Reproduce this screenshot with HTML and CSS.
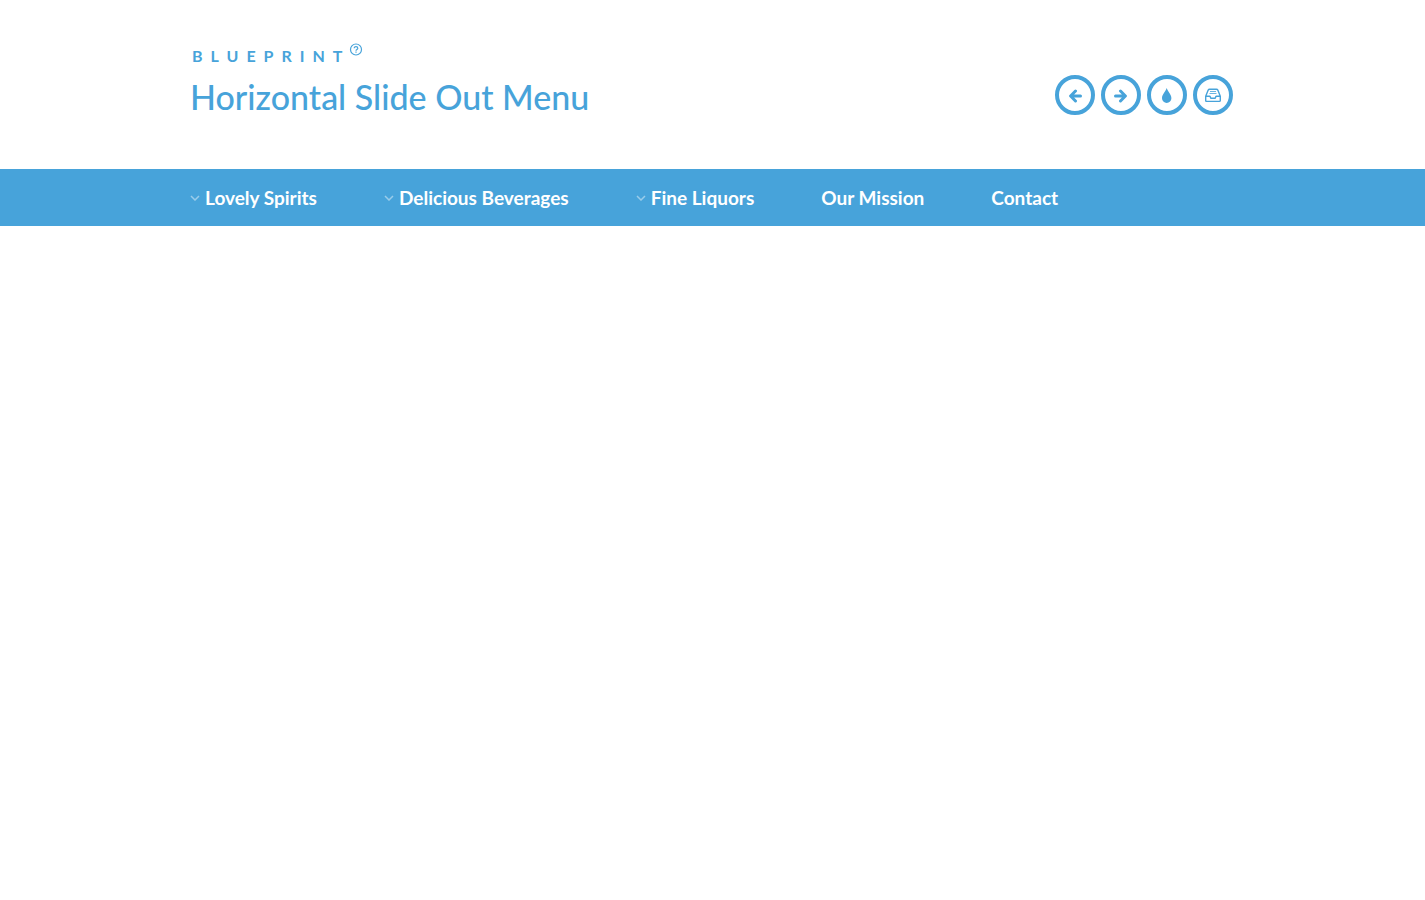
FILE: index.html
```html
<!DOCTYPE html>
<html lang="en">
<head>
<meta charset="utf-8">
<meta name="viewport" content="width=device-width, initial-scale=1">
<title>Horizontal Slide Out Menu</title>
<link rel="stylesheet" href="styles.css">
</head>
<body>
<header class="header">
  <div class="heading">
    <p class="kicker">Blueprint<a class="help" href="#about" aria-label="About Blueprint"><svg viewBox="0 0 14 14" aria-hidden="true"><circle cx="7" cy="6.500" r="5.500"/><path d="M5.200 5.300c0-2.300 3.600-2.200 3.600 0 0 1.200-1.800 1.200-1.800 2.400M7 8.600v1.200"/></svg></a></p>
    <h1 class="title">Horizontal Slide Out Menu</h1>
  </div>
  <nav class="tools" aria-label="Demo navigation">
    <a class="tool" href="#previous" aria-label="Previous"><svg viewBox="0 0 16 16" aria-hidden="true"><path class="thick" d="M13.500 9H4.500M8.500 4L3.600 9l4.900 5"/></svg></a>
    <a class="tool" href="#next" aria-label="Next"><svg viewBox="0 0 16 16" aria-hidden="true"><path class="thick" d="M2.500 9h9M7.500 4l4.900 5-4.900 5"/></svg></a>
    <a class="tool" href="#article" aria-label="Article"><svg viewBox="0 0 16 16" aria-hidden="true"><path class="solid" d="M7.700 1C6.700 4.500 3 7.500 3 11.200a4.700 4.700 0 0 0 9.400 0C12.400 7.500 8.700 4.500 7.700 1z"/></svg></a>
    <a class="tool" href="#archive" aria-label="Archive"><svg viewBox="0 0 16 16" aria-hidden="true"><path class="thin" d="M.7 9.200L3.200 3.100Q3.600 2.300 4.500 2.300h7Q12.400 2.300 12.800 3.100L15.300 9.200V13.400Q15.300 14.400 14.300 14.400H1.700Q.7 14.400.7 13.400zM.7 9.200H5l.8 2h4.400l.8-2h4.300"/><path class="hairline" d="M5 4.500h6M4.500 6.500h7"/></svg></a>
  </nav>
</header>
<nav class="menu" aria-label="Main">
  <ul class="menu-list">
    <li><a class="link" href="#spirits"><svg class="chevron" viewBox="0 0 10 6" aria-hidden="true"><path d="M1 1l4 4 4-4"/></svg>Lovely Spirits</a></li>
    <li><a class="link" href="#beverages"><svg class="chevron" viewBox="0 0 10 6" aria-hidden="true"><path d="M1 1l4 4 4-4"/></svg>Delicious Beverages</a></li>
    <li><a class="link" href="#liquors"><svg class="chevron" viewBox="0 0 10 6" aria-hidden="true"><path d="M1 1l4 4 4-4"/></svg>Fine Liquors</a></li>
    <li><a class="link" href="#mission">Our Mission</a></li>
    <li><a class="link" href="#contact">Contact</a></li>
  </ul>
</nav>
</body>
</html>
```
FILE: styles.css
```css
* { box-sizing: border-box; }
body { margin: 0; background: #fff; color: #47a3da; font-family: Lato, sans-serif; }
a { color: inherit; text-decoration: none; }
svg { display: block; fill: none; stroke: currentColor; }
.header { display: flex; justify-content: space-between; align-items: flex-start; width: 90%; max-width: 1105px; margin: 0 auto; padding: 43px 32px 50px 30px; }
.kicker { display: flex; margin: 0; padding-left: 2px; font-size: 16px; line-height: 26px; font-weight: 700; letter-spacing: 8px; text-transform: uppercase; }
.help { width: 14px; height: 14px; margin-left: -1px; }
.help svg { width: 14px; height: 14px; stroke-width: 1.2; }
.title { margin: 5px 0 0; font-size: 34px; line-height: 45px; font-weight: 500; }
.tools { display: flex; gap: 6px; padding-top: 32px; }
.tool { display: grid; place-items: center; width: 40px; height: 40px; border: 4px solid; border-radius: 50%; }
.tool svg { width: 16px; height: 16px; }
.thick { stroke-width: 3; stroke-linecap: round; stroke-linejoin: round; }
.solid { fill: currentColor; stroke: none; }
.thin { stroke-width: 1.4; stroke-linejoin: round; }
.hairline { stroke-width: 1; opacity: .8; }
.menu { background: #47a3da; color: #fff; }
.menu-list { display: flex; gap: 67px; width: 90%; max-width: 1105px; margin: 0 auto; padding: 0 32px 0 30px; list-style: none; }
.link { display: flex; align-items: center; height: 57px; font-size: 19px; font-weight: 700; white-space: nowrap; }
.chevron { width: 10px; height: 6px; margin-right: 5px; opacity: .45; stroke-width: 1.5; }
```
